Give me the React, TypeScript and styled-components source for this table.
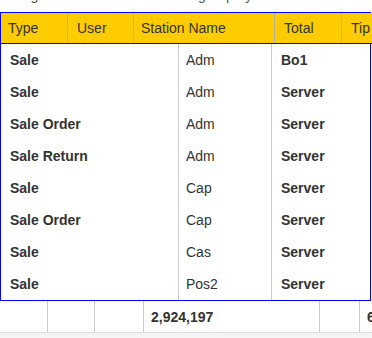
import styled, { createGlobalStyle } from "styled-components";

const GlobalStyle = createGlobalStyle`
  body {
    margin: 0;
    font-family: "Liberation Sans", Arial, sans-serif;
    color: #333;
    background: #fff;
  }
`;

const Page = styled.div`
  width: 372px;
  height: 338px;
  overflow: hidden;
  display: flex;
  flex-direction: column;
`;
const GroupPanel = styled.div`
  height: 12px;
  overflow: hidden;
  flex-shrink: 0;
  div {
    margin-top: -13px;
    padding-left: 8px;
    font-size: 14px;
    line-height: 16px;
    color: #555;
    white-space: nowrap;
  }
`;
const Grid = styled.div`
  width: 369px;
  border: 1px solid #0000ff;
  flex-shrink: 0;
`;
const HeaderRow = styled.div`
  display: flex;
  height: 30px;
  background: #ffcc00;
  border-bottom: 1px solid #0000ff;
  margin-right: -2px;
`;
const HeaderCell = styled.div<{ $w?: number; $pad: number }>`
  display: flex;
  align-items: center;
  box-sizing: border-box;
  width: ${(p) => (p.$w ? `${p.$w}px` : "auto")};
  flex: ${(p) => (p.$w ? "none" : "1")};
  padding-left: ${(p) => p.$pad}px;
  font-size: 14px;
  color: #333;
  white-space: nowrap;
  overflow: hidden;
  & + & {
    border-left: 1px solid #b5b0a0;
  }
`;
const Row = styled.div`
  display: grid;
  grid-template-columns: 177px 93px 1fr;
  height: 32px;
`;
const Cell = styled.div<{ $bold?: boolean; $pad: number; $line?: boolean }>`
  display: flex;
  align-items: center;
  padding-left: ${(p) => p.$pad}px;
  font-size: 14px;
  font-weight: ${(p) => (p.$bold ? 700 : 400)};
  border-left: ${(p) => (p.$line ? "1px solid #ccc" : "none")};
  white-space: nowrap;
`;
const Footer = styled.div`
  display: grid;
  grid-template-columns: 47px 47px 49px 176px 40px 1fr;
  height: 31px;
  border-bottom: 1px solid #ddd;
  flex-shrink: 0;
`;
const FooterCell = styled.div<{ $line?: boolean }>`
  display: flex;
  align-items: center;
  padding-left: 7px;
  font-size: 14px;
  font-weight: 700;
  border-left: ${(p) => (p.$line ? "1px solid #ccc" : "none")};
  white-space: nowrap;
  overflow: hidden;
`;
const Filler = styled.div`
  flex: 1;
  background: #f5f5f5;
`;

const rows = [
  { type: "Sale", station: "Adm", total: "Bo1" },
  { type: "Sale", station: "Adm", total: "Server" },
  { type: "Sale Order", station: "Adm", total: "Server" },
  { type: "Sale Return", station: "Adm", total: "Server" },
  { type: "Sale", station: "Cap", total: "Server" },
  { type: "Sale Order", station: "Cap", total: "Server" },
  { type: "Sale", station: "Cas", total: "Server" },
  { type: "Sale", station: "Pos2", total: "Server" },
];

function App() {
  return (
    <Page>
      <GlobalStyle />
      <GroupPanel>
        <div>Drag a column header here to group by that column</div>
      </GroupPanel>
      <Grid>
        <HeaderRow>
          <HeaderCell $w={66} $pad={7}>
            Type
          </HeaderCell>
          <HeaderCell $w={66} $pad={9}>
            User
          </HeaderCell>
          <HeaderCell $w={141} $pad={7}>
            Station Name
          </HeaderCell>
          <HeaderCell $w={67} $pad={9}>
            Total
          </HeaderCell>
          <HeaderCell $pad={9}>Tip</HeaderCell>
        </HeaderRow>
        {rows.map((r, i) => (
          <Row key={i}>
            <Cell $bold $pad={9}>
              {r.type}
            </Cell>
            <Cell $pad={7} $line>
              {r.station}
            </Cell>
            <Cell $bold $pad={9} $line>
              {r.total}
            </Cell>
          </Row>
        ))}
      </Grid>
      <Footer>
        <FooterCell />
        <FooterCell $line />
        <FooterCell $line />
        <FooterCell $line>2,924,197</FooterCell>
        <FooterCell $line />
        <FooterCell $line>6</FooterCell>
      </Footer>
      <Filler />
    </Page>
  );
}

export default App;
